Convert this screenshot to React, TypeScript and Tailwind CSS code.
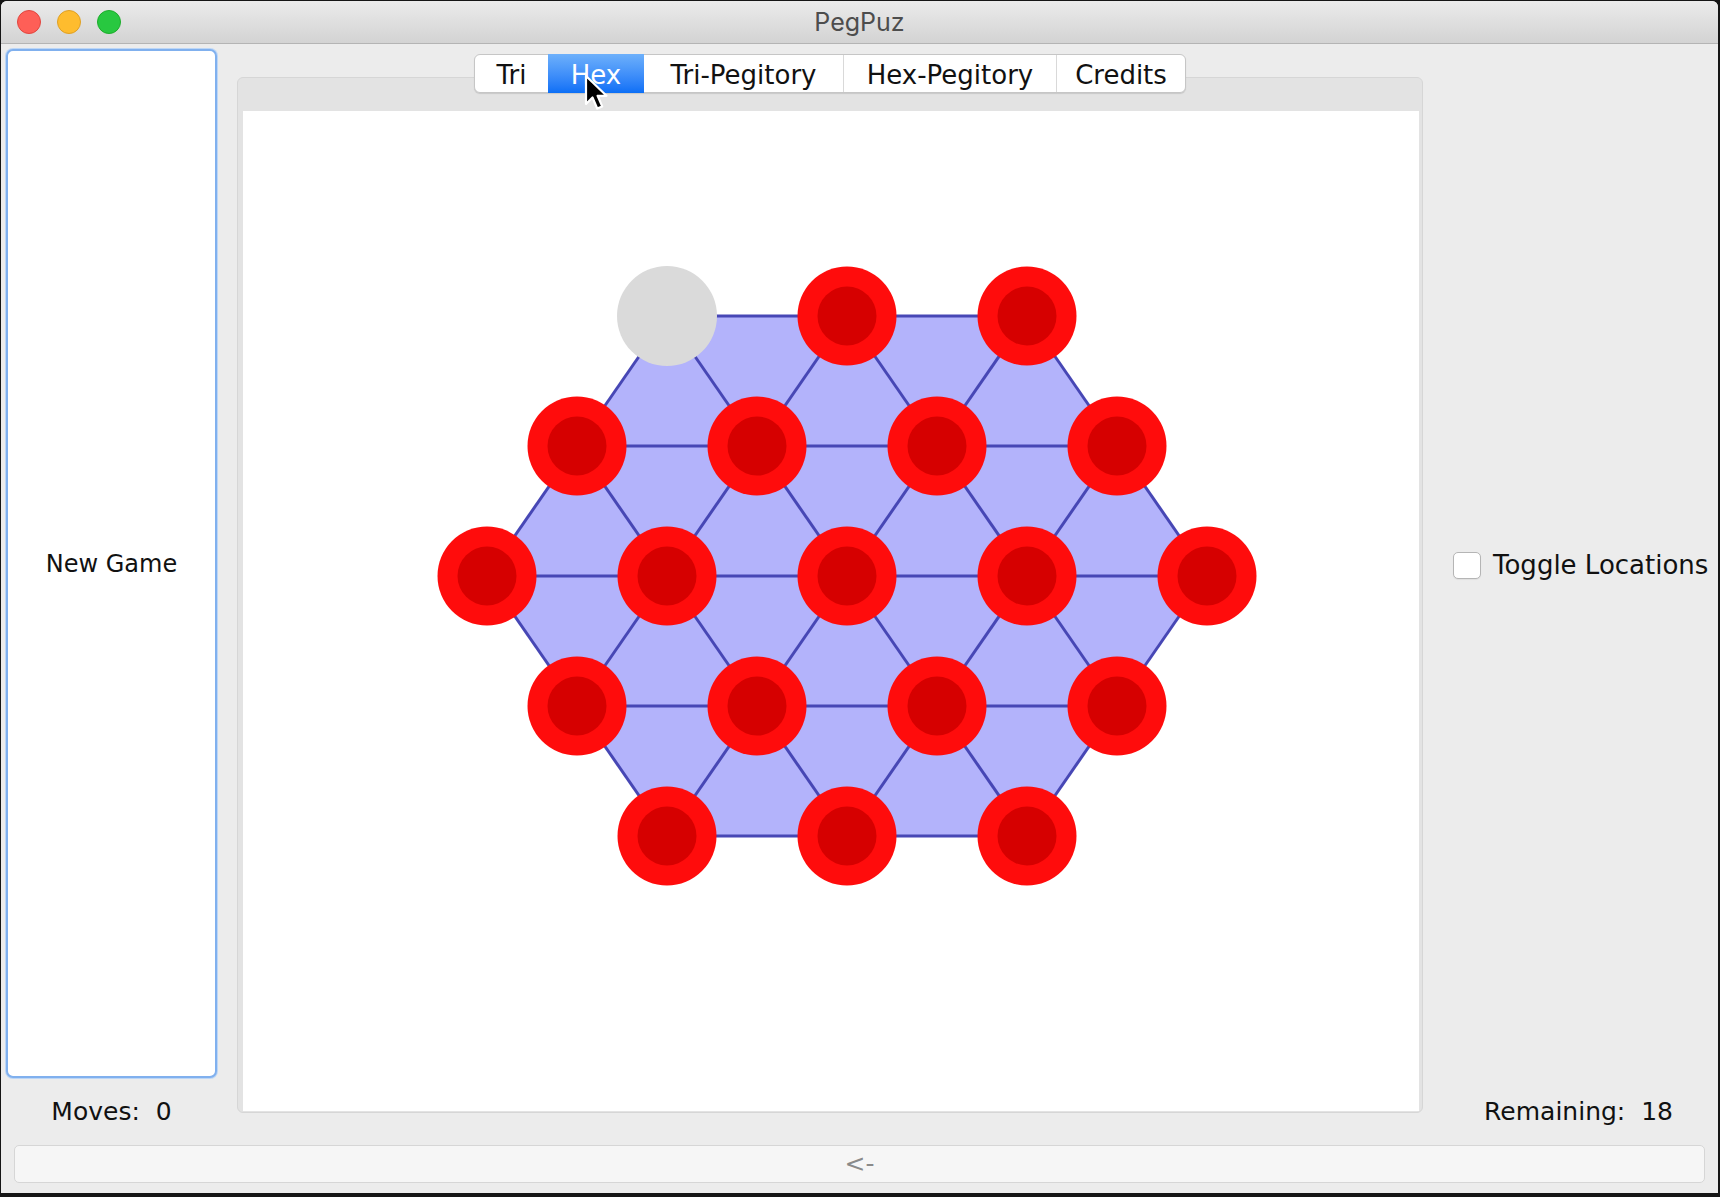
import React from "react";

const ROWS = [3, 4, 5, 4, 3];
const CX = 604;
const ROW_Y = [205, 335, 465, 595, 725];
const STEP = 180;

type Pt = { r: number; i: number; x: number; y: number };

const points: Pt[] = [];
ROWS.forEach((n, r) => {
  for (let i = 0; i < n; i++) {
    points.push({ r, i, x: CX + (i - (n - 1) / 2) * STEP, y: ROW_Y[r] });
  }
});

const edges: [Pt, Pt][] = [];
points.forEach((a) => {
  points.forEach((b) => {
    if (b.r === a.r && b.i === a.i + 1) edges.push([a, b]);
    if (b.r === a.r + 1 && Math.abs(b.x - a.x) === STEP / 2) edges.push([a, b]);
  });
});

function Board() {
  const hex = [
    [CX - 180, 205],
    [CX + 180, 205],
    [CX + 360, 465],
    [CX + 180, 725],
    [CX - 180, 725],
    [CX - 360, 465],
  ]
    .map((p) => p.join(","))
    .join(" ");

  return (
    <svg width="1176" height="1000" viewBox="0 0 1176 1000" className="block">
      <polygon points={hex} fill="#b3b3fb" />
      {edges.map(([a, b], k) => (
        <line key={k} x1={a.x} y1={a.y} x2={b.x} y2={b.y} stroke="#4747b5" strokeWidth={3} />
      ))}
      {points.map((p, k) =>
        p.r === 0 && p.i === 0 ? (
          <circle key={k} cx={p.x} cy={p.y} r={50} fill="#dadada" />
        ) : (
          <g key={k}>
            <circle cx={p.x} cy={p.y} r={49.5} fill="#ff0c0c" />
            <circle cx={p.x} cy={p.y} r={29.5} fill="#d60000" />
          </g>
        )
      )}
    </svg>
  );
}

// mouse pointer sitting on the Hex tab
function Cursor() {
  return (
    <svg width="26" height="38" viewBox="0 0 26 38" className="absolute left-[36px] top-[20px]">
      <path
        d="M2 2 L2 30 L8.5 23.5 L13.2 34.5 L18.2 32.4 L13.6 21.8 L22.5 21.8 Z"
        fill="#000"
        stroke="#fff"
        strokeWidth={2.2}
        strokeLinejoin="round"
      />
    </svg>
  );
}

const tabs = [
  { label: "Tri", w: "w-[73px]" },
  { label: "Hex", w: "w-[96px]" },
  { label: "Tri-Pegitory", w: "w-[199px]" },
  { label: "Hex-Pegitory", w: "w-[213px]" },
  { label: "Credits", w: "w-[129px]" },
];

export default function App() {
  return (
    <div className="w-[1720px] h-[1197px] bg-[#151515] pt-[1px] pl-[1px] overflow-hidden">
      <div
        className="w-[1717px] h-[1192px] bg-[#ececec] rounded-t-[6px] overflow-hidden flex flex-col"
        style={{ fontFamily: '"DejaVu Sans", "Liberation Sans", sans-serif' }}
      >
        {/* title bar */}
        <div className="h-[43px] shrink-0 grid grid-cols-[1fr_auto_1fr] items-center border-b border-[#b4b4b4] bg-gradient-to-b from-[#ebebeb] to-[#d3d3d3]">
          <div className="flex items-center gap-[16px] pl-[16px]">
            <div className="w-[24px] h-[24px] rounded-full bg-[#fe5f57] border border-[#e1463f]" />
            <div className="w-[24px] h-[24px] rounded-full bg-[#febc2e] border border-[#dfa024]" />
            <div className="w-[24px] h-[24px] rounded-full bg-[#28c840] border border-[#1dad2b]" />
          </div>
          <div
            className="text-[25px] text-[#4d4d4d] leading-none pt-[1px]"
            style={{ fontFamily: 'Inter, "Noto Sans", sans-serif' }}
          >
            PegPuz
          </div>
          <div />
        </div>

        {/* body */}
        <div className="h-[1101px] shrink-0 flex items-start pl-[5px] text-[25px] text-[#111]">
          {/* left column */}
          <div className="w-[211px] flex flex-col">
            <button className="mt-[5px] h-[1029px] w-full bg-white border-2 border-[#80b0ee] rounded-[7px] shadow-[0_0_0_1px_#bcd6f6] flex items-center justify-center text-[24px]">
              New Game
            </button>
            <div className="mt-[19px] h-[30px] leading-[30px] text-center whitespace-pre">Moves:  0</div>
          </div>

          {/* center column */}
          <div className="ml-[20px] w-[1186px] flex flex-col items-center">
            <div className="relative z-10 mt-[10px] h-[39px] flex bg-white border border-[#c6c6c6] rounded-[6px] shadow-[0_1px_1px_rgba(0,0,0,0.12)] text-[26px]">
              {tabs.map((t, k) => (
                <div
                  key={t.label}
                  className={
                    t.w +
                    " relative flex items-center justify-center pt-[3px] " +
                    (k === 1
                      ? "bg-gradient-to-b from-[#6db0fb] to-[#0a6ff6] text-white -my-[1px]"
                      : "") +
                    (k > 2 ? " border-l border-[#d9d9d9]" : "") +
                    (k === 0 ? " rounded-l-[6px]" : "") +
                    (k === 4 ? " rounded-r-[6px]" : "")
                  }
                >
                  {t.label}
                  {k === 1 && <Cursor />}
                </div>
              ))}
            </div>
            <div className="-mt-[16px] w-full h-[1036px] bg-[#e3e3e3] border border-[#d6d6d6] rounded-[6px] pt-[33px] pl-[5px] pr-[3px] pb-[1px]">
              <div className="w-[1176px] h-[1000px] bg-white">
                <Board />
              </div>
            </div>
          </div>

          {/* right column */}
          <div className="w-[295px] flex flex-col">
            <label className="mt-[507px] h-[28px] pl-[30px] flex items-center gap-[12px]">
              <span className="w-[28px] h-[27px] rounded-[5px] border border-[#b5b5b5] bg-white shadow-[0_1px_1px_rgba(0,0,0,0.06)]" />
              <span className="leading-none text-[26px]">Toggle Locations</span>
            </label>
            <div className="mt-[518px] h-[30px] leading-[30px] text-right pr-[45px] whitespace-pre">Remaining:  18</div>
          </div>
        </div>

        {/* back bar */}
        <div className="mx-[13px] h-[38px] shrink-0 bg-[#f6f6f6] border border-[#d6d6d6] rounded-[5px] flex items-center justify-center text-[25px] text-[#8a8a8a]">
          &lt;-
        </div>
      </div>
    </div>
  );
}
